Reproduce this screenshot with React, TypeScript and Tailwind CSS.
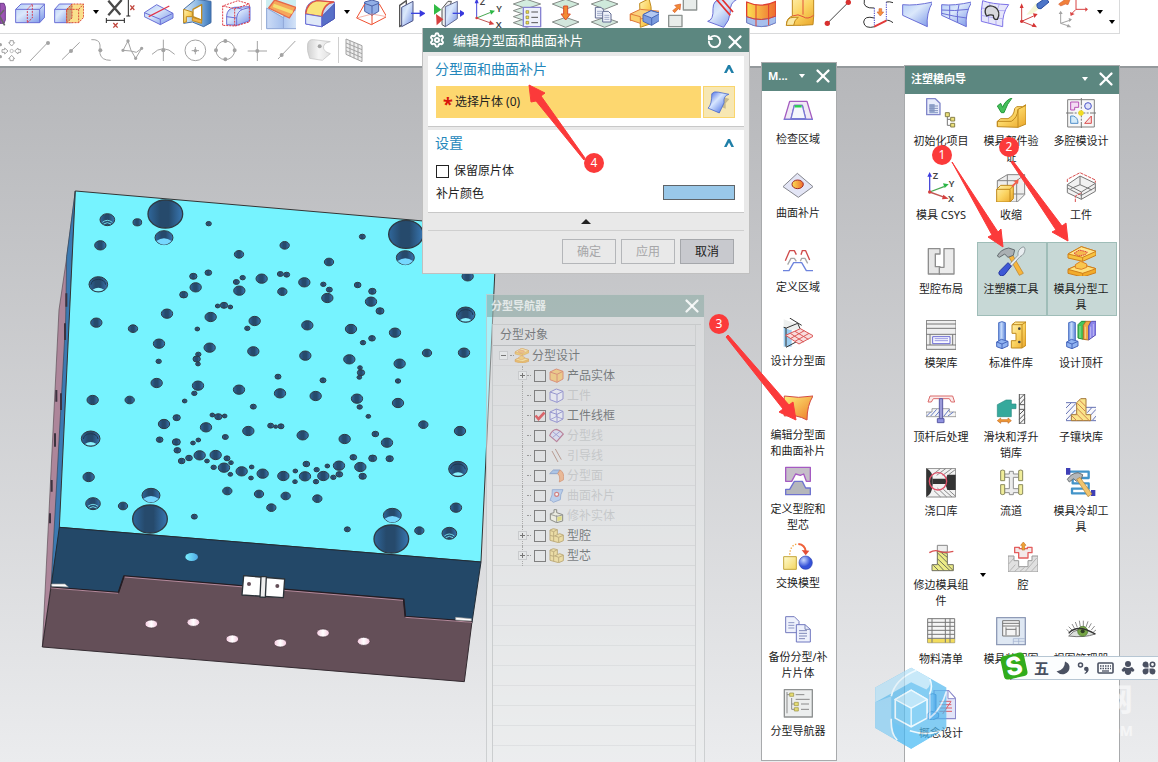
import React from "react";
import { RotateCcw, Settings, X } from "lucide-react";

type Shape = [d: string, fill?: string, stroke?: string, width?: number, dash?: string];

const dot = (x: number, y: number, r: number, ry = r) =>
  `M${x - r} ${y}a${r} ${ry} 0 1 0 ${r * 2} 0a${r} ${ry} 0 1 0 ${-r * 2} 0Z`;

const BLUE = "url(#blue)";
const GOLD = "url(#gold)";
const SILVER = "url(#silver)";
const NAVY = "#6a6fd6";
const GREY = "#a3a3a3";
const BROWN = "#c08a1e";

function Glyph({ shapes, box = "0 0 90 90", className = "size-[30px]" }: { shapes: Shape[]; box?: string; className?: string }) {
  return (
    <svg viewBox={box} className={`block shrink-0 ${className}`} aria-hidden="true">
      {shapes.map(([d, fill = "none", stroke = "none", width = 3, dash], i) => (
        <path key={i} d={d} fill={fill} stroke={stroke} strokeWidth={width} strokeDasharray={dash} strokeLinejoin="round" />
      ))}
    </svg>
  );
}

const layers: Shape[] = [
  ["M4 68l40-14 42 14-42 14Z", "#d7ebe0", "#868c88"],
  ["M4 50l40-14 42 14-42 14Z", "#dcefe5", "#868c88"],
  ["M4 32l40-14 42 14-42 14Z", "#dcefe5", "#868c88"],
  ["M4 12l40-14 42 14-42 14Z", "#d3ecdf", "#868c88"],
];
const twoLayers: Shape[] = [
  ["M4 66l40-14 40 14-40 16Z", "#d2e6dc", "#868c88"],
  ["M4 12l40-14 40 14-40 16Z", "#cfeadb", "#868c88"],
];
const page = (x: number, y: number): Shape[] => [
  [`M${x} ${y}h17l8 8v24h-25Z`, "#f0f3fb", "#626b91"],
  [`M${x + 5} ${y + 12}h15M${x + 5} ${y + 18}h15M${x + 5} ${y + 24}h15`, "none", "#7885b0", 2],
];
const axes: Shape[] = [
  ["M11 54V2", "none", "#4a4ad8", 3],
  ["M5 10l6-16 6 16Z", "#3c3ce0"],
  ["M11 54l42-17", "none", "#48a852", 3],
  ["M50 30l16 2-12 12Z", "#2bb745"],
  ["M11 54l42 15", "none", "#c25653", 3],
  ["M51 61l13 12-16 2Z", "#d6403f"],
  [dot(11, 54, 4), "#d6403f"],
];

interface Tool {
  name: string;
  shapes: Shape[];
  letters?: [string, number, number][];
}

const tools: (Tool | "more" | "sep")[] = [
  {
    name: "分割体",
    shapes: [
      ["M2 28L18 12H89V52L74 68H2Z", BLUE, NAVY],
      ["M2 28H74V68M74 28L89 12", "none", NAVY],
      ["M52 12L37 28V68M37 68L52 54V12", "none", "#d34257", 3, "6 3"],
    ],
  },
  {
    name: "拆分",
    shapes: [
      ["M2 28L16 12H55V68H2Z", BLUE, NAVY],
      ["M2 28H38V68", "none", NAVY],
      ["M38 28L54 12H89V52L74 68H38Z", "#fae08c", "#db4b3c", 3, "6 3"],
      ["M38 28L54 12V54L38 68Z", "#c9a77a", "#db4b3c", 3, "6 3"],
      ["M38 28H74V68M74 28L89 12", "none", "#db4b3c", 3, "6 3"],
    ],
  },
  "more",
  {
    name: "删除尺寸",
    shapes: [
      ["M10 2L46 44M50 0L10 46", "none", "#4a4a4a", 7],
      ["M70 0V48M64 48H76M4 61H58M4 54V69M58 54V69", "none", "#222", 3],
      ["M76 16l12 14M88 16L76 30M25 69l13 14M38 69L25 83", "none", "#c0453c", 4],
    ],
  },
  {
    name: "修剪面",
    shapes: [
      ["M1 38L38 14L87 40V54L49 74L1 50Z", BLUE, NAVY],
      ["M1 38L49 58L87 40M49 58V74", "none", NAVY],
      ["M14 50L76 18", "none", "#e0364c", 4],
    ],
  },
  {
    name: "包容体",
    shapes: [
      ["M2 28L38 -2L84 4V68L62 80L28 66L2 70Z", "url(#steel)", "#466fa6"],
      ["M2 28L28 36V50H10V66L2 68Z", GOLD, BROWN],
      ["M30 28L56 14V60L30 50Z", "#fff", BROWN, 4],
      ["M28 52L56 60V70L28 62Z", "#f0b24a", BROWN],
    ],
  },
  {
    name: "偏置区域",
    shapes: [
      ["M14 74V46Q16 26 38 22L84 20V62L44 76Z", BLUE, NAVY],
      ["M14 50L44 54Q46 34 62 28L84 22M44 54V76M38 22L62 28", "none", NAVY],
      ["M2 76V18L48 2L82 12V66L40 78ZM2 18L38 26L82 12M38 26V78", "none", "#df3e48", 3, "6 3"],
    ],
  },
  "sep",
  {
    name: "倒斜角",
    shapes: [
      ["M0 0H94V86H0Z", "#cdeef1"],
      ["M2 24L50 52L92 28V86H2Z", "url(#steelLight)", "#8fa5d6"],
      ["M8 24L26 0L90 22L70 54Z", "#f6a65b", "#e5674b", 4],
      ["M22 16L80 37", "none", "#f5df72", 10],
      ["M52 50V86", "none", "#8fa5d6"],
    ],
  },
  {
    name: "边倒圆",
    shapes: [
      ["M2 32Q8 4 34 2L88 6V56L50 80L2 72Z", BLUE, NAVY],
      ["M50 50L88 12V56L50 80Z", "#5870c8", "#4b57b4"],
      ["M2 42Q6 8 36 2L86 6Q54 12 50 50Z", "#fae37b", "#df5344", 4],
      ["M2 42L50 50V80L2 72Z", "#dfe8f8", NAVY],
    ],
  },
  "more",
  {
    name: "缩放体",
    shapes: [
      ["M26 6L48 0L68 6V34L48 46L26 34Z", "#91aee6", "#4c62a7"],
      ["M26 10L48 18L68 10M48 18V46", "none", "#4c62a7"],
      ["M26 12L2 54L46 74L92 50L70 12M48 44V74", "none", "#ef5030", 3],
      ["M2 54L48 42L92 50", "none", "#ef9080", 2],
    ],
  },
  {
    name: "移动面",
    shapes: [
      ["M14 16L34 2V64L14 80Z", "#fff", "#555", 4],
      ["M20 22L54 4V62L20 80Z", BLUE, "#4f5685"],
      ["M48 40H78", "none", "#3c46e0", 4],
      ["M74 30L92 40L74 51Z", "#3838dd"],
    ],
  },
  {
    name: "替换面",
    shapes: [
      ["M24 26L42 4H52L34 80L24 74Z", "#eee", "#555", 3],
      ["M34 20L70 4V56L34 80Z", BLUE, "#666d92"],
      ["M0 12L22 29L0 44Z", "#32bb45"],
      ["M6 42L28 58L8 76Z", "#d6403f"],
      ["M56 40H80", "none", "#3c46e0", 4],
      ["M78 30L94 40L78 51Z", "#3838dd"],
    ],
  },
  { name: "坐标系", shapes: axes, letters: [["Z", 20, 15], ["Y", 70, 35], ["X", 68, 84]] },
  {
    name: "图层设置",
    shapes: [
      ...layers,
      ["M34 22H86V80H34Z", "#eef1fb", "#8783d2", 4],
      ["M42 32h8v8h-8ZM42 48h8v8h-8ZM42 64h8v8h-8Z", "#f2e04e", "#8b8436", 2],
      ["M58 36H78M58 52H78M58 68H78", "none", "#555", 3],
    ],
  },
  {
    name: "移动至图层",
    shapes: [...twoLayers, ["M38 18H50V42H58L44 60L30 42H38Z", "#f28a32", "#d94c2e"]],
  },
  { name: "复制至图层", shapes: [...twoLayers, ...page(16, 22), ...page(38, 34)] },
  {
    name: "组合",
    shapes: [
      ["M32 10L60 -4L66 20L68 70L34 82Z", GOLD, BROWN],
      ["M4 42L34 28L94 34L62 52L4 62Z", "#fbd27b", "#e07a3a"],
      ["M42 44L66 32L94 40V60L68 76L42 64Z", "#7a9bde", "#4a69b8"],
      ["M42 44L66 32L94 40L68 54Z", "#b4c9f2", "#4a69b8"],
      ["M68 54V76", "none", "#4a69b8"],
      ["M4 42V60L34 70V50Z", "#fbcf6c", "#e07a3a"],
    ],
  },
  {
    name: "移动对象",
    shapes: [
      ["M2 46H42V80H2Z", "#e8ecea", "#8d9391", 4],
      ["M46 -6H86V30H46Z", "#e8ecea", "#8d9391", 4],
      ["M14 32L26 22L20 16L38 12L36 30L31 26L20 38Z", "#f18a35", "#d85c30", 2],
    ],
  },
  {
    name: "修剪片体",
    shapes: [
      ["M2 64Q20 60 18 26Q18 0 42 -2H90Q68 8 70 36Q68 62 50 82Z", BLUE, NAVY],
      ["M28 -2L70 46M40 -8L78 36", "none", "#e23232", 5],
    ],
  },
  {
    name: "缝合",
    shapes: [
      ["M2 6Q46 26 90 4V66Q46 92 2 66Z", "url(#orange)", "#df3f30", 4],
      ["M2 50Q46 68 90 48V68Q46 92 2 68Z", "#a8bfec", "#6a83cf"],
      ["M2 50Q46 68 90 48M30 14V78M68 12V76", "none", "#df3f30", 3],
    ],
  },
  {
    name: "管道",
    shapes: [
      ["M22 -2H86V48L84 74L50 76H4Q4 54 22 48Z", GOLD, BROWN],
      ["M54 0V44M22 48Q40 40 54 50T86 46", "none", "#e2533c", 3],
      ["M4 76Q6 52 24 52H40Q28 58 26 76Z", "#fae9a4", BROWN],
    ],
  },
  {
    name: "直线",
    shapes: [["M10 70L72 8", "none", "#444", 3], [dot(10, 70, 8), "#d8302f"], [dot(73, 7, 8), "#d8302f"]],
  },
  {
    name: "桥接曲线",
    shapes: [
      ["M34 54Q4 46 2 66Q4 88 36 80M4 0Q-2 26 34 24M90 68Q76 58 70 62", "none", "#333", 3],
      ["M34 24V76M70 6V62", "none", "#4948cb", 3, "4 3"],
      ["M34 80L70 62", "none", "#e33a3a", 6],
      ["M48 26H56V36H62L52 48L42 36H48Z", "#f6923c", "#d8683a", 2],
      ["M70 6Q80 4 90 8", "none", "#333"],
    ],
  },
  { name: "曲面", shapes: [["M2 14Q40 18 92 6Q72 40 76 80L2 46Z", BLUE, NAVY]] },
  {
    name: "网格曲面",
    shapes: [
      ["M2 14Q40 18 92 6Q72 40 76 80L2 46Z", BLUE, NAVY],
      ["M2 30Q40 34 82 28M2 40Q40 50 77 54M26 16V56M54 14Q46 40 50 68", "none", NAVY, 3],
    ],
  },
  {
    name: "投影曲面",
    shapes: [
      ["M8 2Q34 12 86 14Q66 40 68 80L4 64Q2 30 8 2Z", "#e6e6fa", "#7d72e8", 3],
      ["M30 8Q22 38 26 70M58 12Q46 40 48 76M6 24Q40 34 76 32M4 46Q36 54 68 56", "none", "#9b93ee", 2],
      ["M18 24Q28 12 46 22Q64 36 52 58Q40 60 40 46Q32 42 20 48Q12 36 18 24Z", "#d8d8dc", "#333", 4],
    ],
  },
  {
    name: "动态坐标系",
    shapes: [
      ["M22 44L52 8L64 24L40 42Z", "#f4f6d6"],
      ["M54 12L80 -6L90 6L66 26Q52 28 54 12Z", "#4c75c8", "#2b4ea0"],
      ["M8 64V20M8 64L44 48M8 64L44 78", "none", "#cf4444", 3],
      ["M2 24L8 10L14 24ZM42 40L56 42L46 54ZM44 68L54 82L38 80Z", "#d63535"],
      [dot(8, 64, 5), "#d63535"],
    ],
  },
  {
    name: "坐标系变换",
    shapes: [
      ["M54 28V-4M54 28H84M54 28L40 42", "none", "#d84444", 3],
      ["M82 22L90 28L82 35ZM36 36L50 42L38 48Z", "#d84444"],
      ["M8 70V38M8 70L38 60M8 70L32 78", "none", GREY, 3],
      ["M2 42L8 32L14 42ZM32 54L42 58L34 66ZM30 72L40 82L26 82Z", GREY],
      ["M2 12L22 -2L38 -6L30 14L22 12L8 18Z", "#f0803a", "#d6603a", 2],
    ],
  },
];

const snaps: { name: string; shapes: Shape[] }[] = [
  { name: "端点", shapes: [["M6 72L58 18", "none", GREY], [dot(60, 18, 6), GREY]] },
  { name: "中点", shapes: [["M9 68L62 16", "none", GREY], [dot(36, 42, 6), GREY]] },
  { name: "控制点", shapes: [["M4 8Q28 6 30 24V50Q34 70 62 70", "none", GREY], [dot(31, 40, 6), GREY]] },
  {
    name: "极点",
    shapes: [["M6 40L21 12L30 40L44 64L62 34L46 46L30 42Z", "none", GREY], [dot(6, 40, 5) + dot(21, 12, 5) + dot(44, 64, 5) + dot(62, 34, 5), GREY]],
  },
  { name: "交点", shapes: [["M0 52Q34 18 68 52M34 8V72", "none", GREY], [dot(34, 40, 6), GREY]] },
  { name: "圆心", shapes: [[dot(37, 40, 31), "none", GREY], ["M37 30V52M26 41H48", "none", GREY], [dot(37, 41, 5), GREY]] },
  { name: "象限点", shapes: [[dot(34, 40, 28), "none", GREY], [dot(34, 12, 6) + dot(34, 67, 6) + dot(6, 40, 6) + dot(62, 40, 6), GREY]] },
  { name: "存在点", shapes: [["M37 12V72M8 42H66", "none", GREY], [dot(37, 42, 6), GREY]] },
  { name: "曲线上的点", shapes: [["M6 66L58 12", "none", GREY], [dot(17, 54, 6), GREY]] },
  {
    name: "面上的点",
    shapes: [
      ["M2 20Q6 6 20 8L70 14Q46 18 50 36Q54 46 70 50L46 70L8 64Q-2 40 2 20Z", SILVER, "#c0c0c0", 2],
      [dot(38, 28, 6), GREY],
    ],
  },
];

const gridSnap: Shape[] = [
  ["M6 6L54 26V74L6 52Z", "#eee", GREY],
  ["M18 11V58M30 16V64M42 21V69M6 18L54 38M6 30L54 50M6 41L54 62", "none", GREY],
];

const moldParting: Tool[] = [
  {
    name: "检查区域",
    shapes: [
      ["M4 70L20 16H72L88 70H68L58 28H34L24 70Z", "#f0eaf4", "#a45bc0", 4],
      ["M34 28L24 68H68L58 28Z", "#f5f7fc", "#7779d4", 4],
      ["M2 70H90", "none", "#7779d4", 4],
      ["M35 31H56", "none", "#2bd34c", 7],
    ],
  },
  {
    name: "曲面补片",
    shapes: [
      ["M0 50L43 10L90 50L46 82Z", "#e3e5f5", "#85868e", 3],
      [dot(44, 43, 17, 13), "url(#orange)", "#a02b2b", 3],
    ],
  },
  {
    name: "定义区域",
    shapes: [
      ["M7 50L20 20H34L40 32M56 20H68L80 48M54 32L58 20", "none", "#cf4b4b", 4],
      ["M14 62L24 43H34L40 52M52 52L56 43H66L74 58", "none", "#a9a9a9", 4],
      ["M0 80H18L32 56H56L70 80H90", "none", "#6d83dd", 4],
    ],
  },
  {
    name: "设计分型面",
    shapes: [
      ["M2 28H26V86H2Z", "#9ccdf0"],
      ["M2 4L48 20V34L20 36L2 28Z", "#edefee"],
      ["M2 28L10 30L44 16M20 0L56 22M9 30V86M9 88L50 66M44 16L54 38", "none", "#333", 3],
      ["M8 52L52 32L92 54L48 78Z", "#f8dcdc", "#db5757", 3],
      ["M22 46L62 72M36 40L76 64M22 62L64 38M36 70L78 46", "none", "#db5757", 3],
    ],
  },
  {
    name: "编辑分型面和曲面补片",
    shapes: [["M4 12Q46 20 90 12Q72 40 72 84Q40 66 4 72Q0 40 4 12Z", "url(#sunset)", "#d34b3f", 3]],
  },
  {
    name: "定义型腔和型芯",
    shapes: [
      ["M8 4H82V46L70 46L62 24L52 28L38 24L26 46H8Z", "#c5bfc8", "#a55ac2", 4],
      ["M8 86V70H20L34 46H58L68 66H82V86Z", "#b5b7bb", "#6f73cf", 4],
    ],
  },
  {
    name: "交换模型",
    shapes: [
      ["M2 50H40V88H2Z", "url(#paleGold)", "#c4a73c", 3],
      [dot(68, 68, 20), "url(#ball)", "#2d42b0", 2],
      ["M20 44Q22 14 44 12", "none", "#f0a23b", 4, "4 5"],
      ["M46 12Q66 14 68 34", "none", "#ef623b", 6],
      ["M56 30L79 32L68 46Z", "#e34e38"],
    ],
  },
  {
    name: "备份分型/补片片体",
    shapes: [
      ["M8 8H34L48 22V56H8Z", "#eef1fc", "#7479bd", 3],
      ["M16 26H34M16 34H34M16 42H34", "none", "#8d96c4", 3],
      ["M40 32H66L82 46V84H40Z", "#eef1fc", "#6f76c0", 3],
      ["M66 32V46H82M48 50H72M48 58H72M48 66H72M48 74H66", "none", "#7f88b8", 3],
    ],
  },
  {
    name: "分型导航器",
    shapes: [
      ["M4 5H88V87H4Z", "#eceeee", "#8e9191", 4],
      ["M12 12V76M26 30V64H36M26 48H34M12 20H20", "none", "#8b8b8b", 3],
      ["M20 15h12v10h-12ZM34 43h12v10h-12ZM34 59h12v10h-12Z", "#e6dc72", "#969043", 2],
      ["M38 20H64M38 34H80M54 48H78M54 64H78", "none", "#8a8a8a", 3],
    ],
  },
];

const bolt: Shape[] = [
  ["M8 8Q18 2 28 8V62H8Z", "url(#steelV)", "#4d70c2", 3],
  ["M2 66L16 58L36 64V78L18 86L2 80Z", "#8fb2f1", "#4666bc", 3],
  ["M2 66L18 72L36 64M18 72V86", "none", "#4666bc"],
];
const hammer: Shape[] = [
  ["M36 28L48 24L82 82L70 88Z", "#f7b63e", "#b97b21", 2],
  ["M4 30Q14 10 38 6L56 12L52 28L36 34L26 24L10 34Z", "#aab0b3", "#626a6e", 3],
];
const moldHalves: Shape[] = [
  ["M6 24L46 2L90 16V28L50 46L6 36Z", "#f6c23f", "#cf7f1c"],
  ["M6 24L46 2L90 16L50 34Z", "#ffe68e", "#cf7f1c"],
  ["M50 34V46", "none", "#cf7f1c"],
  ["M24 22L40 12L64 18L58 26L38 30Z", "#f5b94d", "#dc4343", 3, "5 2"],
  ["M6 70L42 54L90 68V80L50 93L6 82Z", "#f2ac2a", "#cf7f1c"],
  ["M6 70L42 54L90 68L50 82Z", "#ffe07a", "#cf7f1c"],
  ["M50 82V93", "none", "#cf7f1c"],
  ["M28 56L44 46L62 54V64L46 70L28 66Z", "#f9c64d", "#dc8126"],
];

type WizardItem = Tool & { active?: boolean };
const wizard: (WizardItem | "more")[] = [
  {
    name: "初始化项目",
    shapes: [
      ["M2 2H28L42 16V50H2Z", "#e8ecfb", "#8287ca", 4],
      ["M10 18H26V42H36V46H10Z", "#94a6cd"],
      ["M10 24H36M10 31H36M10 38H36", "none", "#8292bd", 3],
      ["M64 54V82H74M64 64H74", "none", "#777", 3],
      ["M58 44h12v12h-12ZM74 58h12v11h-12ZM74 76h12v11h-12Z", "#ebe07a", "#87804a", 3],
    ],
  },
  {
    name: "模具部件验证",
    shapes: [
      ["M4 70L14 62H36Q54 54 56 32L62 26H80L90 20V78L66 88L4 86Z", GOLD, BROWN],
      ["M4 70H46Q64 60 66 34L90 22M66 34V88M4 70V86", "none", BROWN],
      ["M4 24L14 16L20 28Q28 6 48 0Q34 16 24 44H16Z", "#46c05a", "#23973a"],
    ],
  },
  {
    name: "多腔模设计",
    shapes: [
      ["M5 5H85V87H5Z", "#f7f7f7", "#818181", 3],
      ["M46 0V90M0 45H90", "none", "#777", 3, "22 4 6 4"],
      [dot(45, 45, 8), "#f2dc20"],
      ["M14 12H38V28H26V36H14Z", "#f3dcf3", "#b651b6", 3],
      [dot(66, 24, 10), "#dfe2fa", "#4b56c8"],
      ["M14 76V54H22Q36 58 36 76Z", "#d5ecfa", "#518fc8"],
      ["M56 76L76 54V76Z", "#fae0e0", "#d94c4c"],
    ],
  },
  {
    name: "模具 CSYS",
    shapes: [
      ["M11 60V12", "none", "#4a4ad8", 4],
      ["M4 14L11 0L18 14Z", "#3c3ce0"],
      ["M11 60L54 44", "none", "#48a852", 4],
      ["M51 34L68 37L56 48Z", "#2bb745"],
      ["M11 60L56 76", "none", "#c25653", 4],
      ["M52 68L68 80L48 82Z", "#d6403f"],
      [dot(11, 60, 5), "#d6403f"],
    ],
    letters: [["Z", 20, 20], ["Y", 68, 44], ["X", 66, 90]],
  },
  {
    name: "收缩",
    shapes: [
      ["M4 26L34 8H86V68L64 90H4Z", "#eee", "#858585"],
      ["M4 26H62V90M62 26L86 8M34 8V66H86", "none", "#858585"],
      ["M2 52L14 40H52V80L42 90H2Z", GOLD, BROWN],
      ["M2 52H42V90M42 52L52 42", "none", BROWN],
      ["M46 42L58 30L52 28L68 22L66 36L62 34L50 46Z", "#f3604b"],
    ],
  },
  {
    name: "工件",
    shapes: [
      ["M4 38L42 12L88 34V58L46 82L4 62Z", "#f2f2f2", "#777"],
      ["M4 38L46 60L88 34M46 60V82M4 48L46 70L88 46M42 12V38L14 50M42 38L78 54", "none", "#777"],
      ["M4 30V22L42 2L88 24V32M28 90V72L48 62", "none", "#d94d4d", 3, "10 3"],
    ],
  },
  {
    name: "型腔布局",
    shapes: [["M7 8H42V24H28V62H42V84H7Z", "#e6e6e6", "#8e8e8e", 4], ["M54 8H84V84H40V64H54Z", "#ececec", "#8e8e8e", 4]],
  },
  {
    name: "注塑模工具",
    active: true,
    shapes: [...hammer, ["M78 4Q86 0 87 10Q86 26 72 32L34 74L28 68L66 28Q64 12 78 4Z", "#e8edf0", "#70797d", 2], ["M36 50L46 60L26 86Q16 94 10 86Q6 80 12 74Z", "#3d58d5", "#2638a0", 3]],
  },
  { name: "模具分型工具", active: true, shapes: moldHalves },
  {
    name: "模架库",
    shapes: [
      ["M1 1H90V88H1Z", "#efefef", "#777", 3],
      ["M1 12H90M1 25H90M1 43H90M1 75H90M12 43V75M80 43V75", "none", "#777", 3],
      ["M20 50H72V71H20Z", "#f8f8ff", "#6b6bd4", 3],
      ["M26 56H66M26 62H66", "none", "#6b6bd4", 2],
    ],
  },
  {
    name: "标准件库",
    shapes: [
      ...bolt,
      ["M48 14L58 6H90V76L78 84H46V62H60V40H48Z", GOLD, BROWN],
      ["M78 14V84M78 14L90 6M78 14H48", "none", BROWN],
      [dot(70, 26, 4) + dot(70, 66, 4), "#444"],
    ],
  },
  {
    name: "设计顶杆",
    shapes: [
      ...bolt,
      ["M36 14L46 4H60L52 16V58L36 54Z", "#45c65a", "#258a37", 3],
      ["M52 16L60 4H74L68 18V60L52 58Z", "#f3a944", "#b97228", 3],
      ["M68 18L76 4H90V44L68 60Z", "#8b84ea", "#5850b2", 3],
      ["M42 18V54M58 20V56M74 20V54M82 12V48", "none", "#ffffffaa", 2],
    ],
  },
  {
    name: "顶杆后处理",
    shapes: [
      ["M6 24L12 6H80L86 24H76L70 14H22L16 24Z", "#fbeaea", "#db6b6b", 3],
      ["M0 54H18V44H70V54H90V68H0Z", "#f5f5f5", "#777", 2],
      ["M2 66L14 54M14 66L32 46M28 66L42 50M54 66L70 46M66 66L82 54", "none", "#667cc5", 3],
      ["M40 14H50V76H40Z", "#9b9bd8", "#5a5aa4", 3],
      ["M34 74H54V86H34Z", "#8f92e0", "#5a5aa4", 3],
    ],
  },
  {
    name: "滑块和浮升销库",
    shapes: [
      ["M4 32L30 18H46V30H60V44H46V68H4Z", "#35a99c", "#2b8b83", 2],
      ["M4 80L14 72V77H36V72L46 80L36 88V83H14V88Z", "#f19a35", "#c46a22", 2],
      ["M70 0H86V90H70Z", "#f4f4f4", "#555", 3],
      ["M70 16L86 0M70 32L86 14M70 62L86 46M70 76L86 60M70 90L86 74M70 32H86M70 46H86", "none", "#555", 3],
    ],
  },
  {
    name: "子镶块库",
    shapes: [
      ["M0 26H30V80H0ZM60 40H92V80H60Z", "#f8f8fc"],
      ["M0 42L16 26M0 60L30 28M0 78L28 48M64 56L78 40M66 72L90 46M80 78L92 64M0 80H92M0 26H30M60 40H92", "none", "#6774b4", 3],
      ["M32 26L44 14H60V62H74V80H16V62H32Z", "#fae48a", "#a27638", 3],
      ["M34 28L58 52M40 18L60 38M32 42L70 80M30 58L52 80M18 66L32 80", "none", "#d3844e", 3],
    ],
  },
  {
    name: "浇口库",
    shapes: [
      ["M1 1H89V87H1Z", "#f2f2f2", "#888"],
      ["M20 20L44 1M32 22L60 1M50 22L78 1M68 20L89 4M24 68L44 87M34 60L62 87M52 64L78 87M70 68L89 85", "none", "#8a8a8a", 3],
      ["M1 1Q20 10 20 34V50Q18 78 1 87Z", "#333"],
      ["M20 32H60L64 20H89V66H64L58 48H20Z", "#333"],
      [dot(36, 40, 26), "none", "#df5068", 4],
    ],
  },
  {
    name: "流道",
    shapes: [
      ["M26 18H40V10H52V18H68V28H52V62H68V74H52V80H40V74H26V62H40V28H26Z", "#ececec", "#8e8e8e", 3],
      ["M14 8Q20 4 26 8V38H14ZM14 50H26V78Q20 82 14 78ZM68 8Q74 4 80 8V38H68ZM68 50H80V78Q74 82 68 78Z", "#f0ed9a", "#8a8a5e", 3],
    ],
  },
  {
    name: "模具冷却工具",
    shapes: [
      ["M10 11H68V30H20V46H68V62H18V76H80", "none", "#4394c9", 7],
      ["M0 0H13V20H0ZM75 66H88V84H75Z", "#3e3fb6"],
      ["M4 34Q16 16 36 14L50 20L46 34L32 40L22 32L10 42Z", "#b4b8ba", "#686e72", 3],
      ["M32 34L42 28L78 78L66 86Z", "#f1c46e", "#a9803c", 2],
    ],
  },
  {
    name: "修边模具组件",
    shapes: [
      ["M34 10H64V30H34Z", "#eee", "#888", 3],
      ["M34 28L64 34V68H82V86H18V68H34Z", "#ecec86", "#707060", 3],
      ["M34 32L64 62M34 50L72 86M46 32L64 46M34 64L54 86M22 70L38 86M66 70L80 84", "none", "#70705a", 3],
      ["M10 32Q26 22 40 28T82 28", "none", "#d95151", 4],
    ],
  },
  "more",
  {
    name: "腔",
    shapes: [
      ["M0 42H18V56H32V74H60V56H72V42H90V90H0Z", "#e0e0e0", "#999", 3],
      ["M4 88L22 68M20 88L36 74M36 88L50 76M52 88L86 48M70 88L90 66M2 66L18 48", "none", "#a0a0a0", 2],
      ["M20 16H34V20H58V16H72V32H60V48H32V32H20Z", "#f3e9e9", "#e45e5e", 4],
      ["M46 0L54 10H50V24H42V10H38Z", "#f0a334", "#c87928", 2],
    ],
  },
  {
    name: "物料清单",
    shapes: [
      ["M5 8H86V80H5Z", "#f5f5f5", "#777", 3],
      ["M5 68H86V80H5Z", "#f2dc5d"],
      ["M5 19H86M5 31H86M5 43H86M5 55H86M5 67H86M18 8V80M58 8V80M72 8V80", "none", "#777", 3],
    ],
  },
  {
    name: "模具装配图纸",
    shapes: [
      ["M2 5H88V86H2Z", "#dfe8f3", "#8f9bb7", 4],
      ["M20 14H70V60H20Z", "#f5f5f5", "#777", 3],
      ["M20 22H70M20 30H70M30 34V58M60 34V58M30 40H60", "none", "#777", 3],
      ["M52 68H86M52 76H86M52 68V84M68 68V84", "none", "#9daccc", 2],
    ],
  },
  {
    name: "视图管理器",
    shapes: [
      ["M8 60Q36 24 88 54Q54 66 8 60Z", "#dce0dc", "#777", 3],
      [dot(50, 46, 15), "#76a545", "#46712b", 2],
      [dot(50, 46, 6), "#2f3f24"],
      ["M8 52Q34 22 88 54", "none", "#333", 4],
      ["M10 48L2 40M18 42L8 32M26 38L18 24M34 34L28 18M43 32L40 14M52 31V14M60 33L66 16M68 36L76 22M76 42L86 30M82 48L90 42", "none", "#555", 2],
    ],
  },
  {
    name: "概念设计",
    shapes: [
      ["M24 0H66L89 26V86H24Z", "#e2e5f8", "#8d8bcc", 4],
      ["M66 0V26H89Z", "#fff", "#8d8bcc", 3],
      ["M40 34H76M40 44H76M40 54H78M40 64H78M50 72L74 36", "none", "#d95d68", 3],
      ["M10 14Q20 8 30 14V70H10Z", "url(#steelV)", "#4475bd", 3],
      ["M4 72L16 64L38 70V82L20 90L4 86Z", "#8eb5ee", "#466bb7", 3],
    ],
  },
];

function Letters({ items }: { items?: [string, number, number][] }) {
  if (!items) return null;
  return (
    <svg viewBox="0 0 90 90" className="absolute inset-0 size-[30px] overflow-visible" aria-hidden="true">
      {items.map(([t, x, y]) => (
        <text key={t} x={x} y={y} fontSize="28" fontWeight="600" fontFamily="Noto Sans" fill="#444">{t}</text>
      ))}
    </svg>
  );
}

function Caret({ className = "text-black" }: { className?: string }) {
  return (
    <svg viewBox="0 0 6 4" className={`h-1 w-1.5 ${className}`} aria-hidden="true">
      <path d="M0 0H6L3 4Z" fill="currentColor" />
    </svg>
  );
}

function Toolbars() {
  return (
    <header className="border-b-2 border-[#94999c] bg-white">
      <div className="mr-[38px] flex h-[34px] items-start overflow-hidden border-r border-b border-[#d9dadb]">
        <div className="w-[15px] shrink-0">
          <Glyph box="0 0 45 90" className="h-[30px] w-[15px]" shapes={[["M0 10H12L16 20V60L12 70H0Z", "#9c55b4", "#6f3d8c"], ["M0 44L12 30M0 50L14 76", "none", "#666", 5]]} />
        </div>
        {tools.map((t, i) => {
          if (t === "more")
            return (
              <button key={i} aria-label="更多" className="flex h-6 w-3 shrink-0 items-center justify-start">
                <Caret />
              </button>
            );
          if (t === "sep") return <span key={i} className="h-[30px] w-[5px] shrink-0 border-l border-[#cfcfcf]" />;
          return (
            <button key={i} aria-label={t.name} className="relative mr-[9px] shrink-0">
              <Glyph shapes={t.shapes} />
              <Letters items={t.letters} />
            </button>
          );
        })}
        <button aria-label="更多命令" className="flex h-6 w-3 shrink-0 items-center"><Caret /></button>
        <button aria-label="工具栏选项" className="flex h-6 shrink-0 items-end"><Caret /></button>
      </div>
      <div className="flex h-8 items-center">
        <button aria-label="捕捉点" className="w-[28px] shrink-0">
          <Glyph
            box="0 0 84 72"
            className="h-6 w-[28px]"
            shapes={[
              [dot(1, 20, 5) + dot(1, 56, 5), GREY],
              ["M30 8H40V14H44L35 24L26 14H30ZM30 68H40V62H44L35 52L26 62H30ZM6 35H14V30L24 39L14 48V43H6ZM62 35H54V30L44 39L54 48V43H62Z", "#fff", GREY],
              [dot(35, 39, 5), "none", GREY, 2],
            ]}
          />
        </button>
        {snaps.map((s) => (
          <button key={s.name} aria-label={s.name} className="mr-[7px] shrink-0">
            <Glyph shapes={s.shapes} box="0 0 72 78" className="h-[26px] w-6" />
          </button>
        ))}
        <span className="h-[26px] w-[6px] border-l border-[#cfcfcf]" />
        <button aria-label="栅格点"><Glyph shapes={gridSnap} box="0 0 72 78" className="h-[26px] w-6" /></button>
      </div>
    </header>
  );
}

/* Hole tables: x, y, radius in the drawing's own units. */
const upperHoles = [
  [307, 127, 13], [521, 131, 8], [196, 196, 17], [749, 196, 14], [982, 170, 9], [612, 223, 14], [882, 246, 14], [520, 278, 10],
  [475, 289, 11], [623, 293, 8], [604, 306, 9], [680, 296, 17], [736, 282, 9], [755, 284, 9], [808, 307, 17], [865, 313, 8],
  [883, 329, 9], [968, 315, 10], [1012, 334, 11], [1298, 289, 17], [482, 322, 17], [446, 344, 12], [613, 332, 17], [742, 335, 14],
  [877, 354, 17], [1008, 365, 17], [1035, 393, 12], [548, 378, 7], [567, 376, 11], [586, 381, 7], [396, 401, 17], [527, 411, 17],
  [659, 423, 17], [817, 436, 17], [948, 447, 17], [1080, 458, 17], [184, 428, 17], [294, 446, 14], [487, 447, 7], [637, 445, 8],
  [1011, 475, 10], [984, 488, 8], [372, 491, 17], [524, 503, 17], [655, 514, 17], [811, 527, 17], [943, 538, 17], [1094, 551, 17],
  [1176, 519, 14], [1287, 518, 17], [371, 544, 8], [490, 523, 8], [485, 537, 11], [489, 552, 7], [975, 563, 7], [978, 578, 11],
  [973, 592, 7], [1089, 603, 8], [864, 601, 9], [729, 590, 9], [365, 609, 17], [489, 617, 17], [478, 640, 8], [449, 663, 7],
  [612, 629, 17], [735, 640, 17], [842, 648, 17], [966, 656, 17], [974, 681, 8], [1089, 669, 17], [173, 660, 17], [284, 660, 14],
  [655, 680, 9], [532, 705, 7], [550, 710, 11], [569, 708, 7], [1000, 709, 7], [425, 713, 11],
];
const lowerHoles = [
  [387, 12, 17], [513, 22, 17], [571, 51, 9], [640, 33, 17], [707, 17, 9], [722, 20, 6], [738, 19, 9], [803, 46, 17],
  [929, 57, 17], [1021, 42, 10], [1056, 68, 17], [1165, 14, 14], [1275, 33, 17], [374, 59, 10], [424, 66, 12], [474, 69, 7],
  [490, 60, 7], [427, 91, 10], [462, 114, 10], [440, 123, 10], [494, 106, 17], [542, 105, 17], [576, 115, 9], [588, 128, 7],
  [516, 123, 7], [536, 142, 8], [567, 143, 17], [586, 163, 7], [620, 154, 17], [650, 141, 7], [648, 174, 7], [683, 161, 17],
  [745, 168, 17], [781, 153, 7], [780, 185, 7], [814, 132, 10], [810, 169, 17], [845, 149, 8], [843, 185, 8], [865, 168, 17],
  [877, 138, 7], [895, 172, 8], [912, 137, 17], [913, 163, 10], [955, 112, 10], [976, 141, 17], [983, 169, 11], [1013, 115, 12],
  [1064, 116, 11], [161, 171, 17], [264, 258, 14], [478, 290, 9], [577, 213, 14], [672, 222, 14], [752, 228, 14], [709, 263, 14],
  [847, 236, 14], [937, 328, 9], [1153, 332, 14], [1263, 263, 17],
];
const throughHoles = [[387, 173], [1111, 233], [348, 946], [1072, 1006]];
const steppedHoles = [[190, 313, 28], [1292, 404, 28], [167, 776, 28], [1269, 867, 28]];
const screwHoles = [[217, 119], [174, 971], [1243, 1060]];
const bigHoles = [[391, 102], [1113, 163], [345, 1017], [1069, 1077]];

function MoldModel() {
  return (
    <svg viewBox="0 68 500 694" className="absolute top-0 left-0 h-[694px] w-[500px]" role="img" aria-label="模具三维模型">
      <defs>
        <linearGradient id="blue" x1="0" y1="0" x2="1" y2="1"><stop offset="0" stopColor="#b4cdf7" /><stop offset=".4" stopColor="#dbe8fb" /><stop offset="1" stopColor="#7390e6" /></linearGradient>
        <linearGradient id="gold" x1="0" y1="0" x2="1" y2="1"><stop offset="0" stopColor="#fff2b4" /><stop offset=".5" stopColor="#fbd462" /><stop offset="1" stopColor="#e9a529" /></linearGradient>
        <linearGradient id="paleGold" x1="0" y1="0" x2="1" y2="1"><stop offset="0" stopColor="#fffbd0" /><stop offset="1" stopColor="#f3d560" /></linearGradient>
        <linearGradient id="silver"><stop offset="0" stopColor="#d0d0d0" /><stop offset=".5" stopColor="#f5f5f5" /><stop offset="1" stopColor="#e0e0e0" /></linearGradient>
        <linearGradient id="steel"><stop offset="0" stopColor="#dceaf7" /><stop offset=".6" stopColor="#7fb0e0" /><stop offset="1" stopColor="#3a75b8" /></linearGradient>
        <linearGradient id="steelLight"><stop offset="0" stopColor="#ccdcf6" /><stop offset=".5" stopColor="#a9c2ee" /><stop offset="1" stopColor="#d6e5f8" /></linearGradient>
        <linearGradient id="steelV"><stop offset="0" stopColor="#6f9ae8" /><stop offset=".4" stopColor="#c7dcfb" /><stop offset="1" stopColor="#5f87db" /></linearGradient>
        <linearGradient id="orange"><stop offset="0" stopColor="#fbe052" /><stop offset="1" stopColor="#ee6a2e" /></linearGradient>
        <linearGradient id="sunset" x1="0" y1="0" x2="1" y2="1"><stop offset="0" stopColor="#fdf07a" /><stop offset="1" stopColor="#ee7a26" /></linearGradient>
        <radialGradient id="ball" cx=".35" cy=".3"><stop offset="0" stopColor="#c9d9ff" /><stop offset="1" stopColor="#3552d8" /></radialGradient>
        <linearGradient id="hole"><stop offset="0" stopColor="#2f679c" /><stop offset=".35" stopColor="#264a6c" /><stop offset=".6" stopColor="#264a6c" /><stop offset="1" stopColor="#3877b3" /></linearGradient>
        <linearGradient id="pin"><stop offset="0" stopColor="#f5c9df" /><stop offset=".5" stopColor="#fff" /><stop offset="1" stopColor="#f5c9df" /></linearGradient>
        <linearGradient id="port"><stop offset="0" stopColor="#7af0ff" /><stop offset="1" stopColor="#4fa8e6" /></linearGradient>
      </defs>
      <g transform="translate(35 180) scale(.33333)" strokeLinejoin="round">
        <path d="M121 33L94 240L72 390L22 1401L72 1042Z" fill="#ad869a" stroke="#5b4c55" strokeWidth="2" />
        <path d="M121 33L95 230L92 420L48 1220L75 1042Z" fill="#3b7ab2" stroke="#31475b" strokeWidth="2" />
        <path d="M94 340V380M64 630V665M60 760V800M50 900V935M45 1000V1030M90 430V480M78 640V690" stroke="#3d3340" strokeWidth="6" />
        <path d="M121 33L1386 142L1338 1146L73 1042Z" fill="#76f3ff" stroke="#333" strokeWidth="3" />
        <path d="M73 1042L1338 1146L1311 1328L48 1222Z" fill="#234868" stroke="#222c36" strokeWidth="3" />
        <path d="M48 1222L250 1238L267 1188L1106 1258L1111 1310L1311 1325L1288 1505L22 1401Z" fill="#644f58" stroke="#332a30" strokeWidth="3" />
        <path d="M48 1222L250 1238L267 1188L1106 1258L1111 1310L1311 1325" fill="none" stroke="#241d24" strokeWidth="5" />
        <path d="M48 1224L250 1240M269 1191L1104 1261M1111 1312L1311 1327" fill="none" stroke="#b58a9c" strokeWidth="3" />
        <path d="M50 1212H90L100 1221L50 1219ZM1262 1312L1309 1316V1323L1262 1320Z" fill="#fff" stroke="#999" strokeWidth="2" />
        <g stroke="#2b3238" strokeWidth="4">
          <path d="M626 1187L749 1197L745 1253L621 1245Z" fill="#fff" />
          <path d="M678 1190H694L691 1252L675 1251Z" fill="#eee" />
        </g>
        <circle cx="642" cy="1212" r="6" fill="#644f58" />
        <circle cx="727" cy="1218" r="6" fill="#644f58" />
        <ellipse cx="470" cy="1131" rx="19" ry="12" fill="url(#port)" />
        {[[349, 1332], [475, 1327], [592, 1377], [736, 1389], [864, 1359], [986, 1384]].map(([x, y]) => (
          <ellipse key={x} cx={x} cy={y} rx="19" ry="12" fill="url(#pin)" stroke="#49373f" strokeWidth="2" />
        ))}
        <g fill="url(#hole)" stroke="#2e3a44" strokeWidth="3">
          {upperHoles.map(([x, y, r]) => <ellipse key={`${x}-${y}`} cx={x} cy={y} rx={r} ry={r * 0.82} />)}
          {lowerHoles.map(([x, y, r]) => <ellipse key={`${x}-${y}`} cx={x} cy={y + 720} rx={r} ry={r * 0.82} />)}
          {bigHoles.map(([x, y]) => <ellipse key={x} cx={x} cy={y} rx="52" ry="42" strokeWidth="4" />)}
          {throughHoles.map(([x, y]) => (
            <g key={x}>
              <ellipse cx={x} cy={y} rx="27" ry="21" />
              <path d={`M${x - 23} ${y + 10}Q${x} ${y - 6} ${x + 23} ${y + 10}Q${x + 12} ${y + 21} ${x} ${y + 21}Q${x - 12} ${y + 21} ${x - 23} ${y + 10}Z`} fill="#76d8ff" stroke="none" />
            </g>
          ))}
          {steppedHoles.map(([x, y, r]) => (
            <g key={x}>
              <ellipse cx={x} cy={y} rx={r} ry="23" />
              <path d={`M${x - 22} ${y + 1}Q${x - 20} ${y - 14} ${x} ${y - 15}Q${x + 20} ${y - 14} ${x + 22} ${y + 1}`} fill="none" stroke="#1f3850" />
              <path d={`M${x - 17} ${y + 16}Q${x} ${y + 4} ${x + 17} ${y + 16}Q${x} ${y + 25} ${x - 17} ${y + 16}Z`} fill="#8cf4ff" stroke="none" />
            </g>
          ))}
          {screwHoles.map(([x, y]) => (
            <g key={x}>
              <ellipse cx={x} cy={y} rx="22" ry="18" />
              <path d={`M${x - 15} ${y + 8}Q${x} ${y - 4} ${x + 15} ${y + 8}M${x - 11} ${y + 13}Q${x} ${y + 5} ${x + 11} ${y + 13}`} fill="none" stroke="#6fd8e6" />
            </g>
          ))}
        </g>
      </g>
    </svg>
  );
}

function SectionHead({ children }: { children: React.ReactNode }) {
  return (
    <div className="flex items-center justify-between pr-px">
      <h2 className="text-sm leading-5 text-[#2487bb]">{children}</h2>
      <button aria-label="折叠" className="text-[#1f7fa8]">
        <svg viewBox="0 0 10 10" className="size-2.5" aria-hidden="true"><path d="M0 9H2.600L5 4.500L7.400 9H10L6 1H4Z" fill="currentColor" /></svg>
      </button>
    </div>
  );
}

function EditDialog() {
  return (
    <section role="dialog" aria-label="编辑分型面和曲面补片" className="absolute top-[28px] left-[422px] w-[328px] border border-t-0 border-[#c0c0c0] bg-[#e9e9e9] pb-[9px] text-xs text-[#222]">
      <div className="flex h-6 items-center bg-[#5c8780] pr-[3px] pl-1.5 text-white">
        <Settings className="size-4" strokeWidth={3} />
        <h1 className="ml-2 flex-1 text-[13px] leading-6">编辑分型面和曲面补片</h1>
        <button aria-label="重置" className="mr-0.5 pt-[3px]"><RotateCcw className="size-[15px]" strokeWidth={3} /></button>
        <button aria-label="关闭" className="pt-[3px]"><X className="size-[22px]" strokeWidth={2.5} /></button>
      </div>
      <div className="mx-[5px] mt-1 h-[71px] border-b border-[#c8c8c8] bg-white pt-[3px] pr-[9px] pl-[7px]">
        <SectionHead>分型面和曲面补片</SectionHead>
        <div className="mt-[7px] ml-px flex h-8 gap-0.5">
          <div className="flex flex-1 items-center bg-[#fdd76f] pl-[7px]">
            <span className="w-3 pt-1 text-lg leading-5 font-bold text-[#d8150c]">*</span>
            <span>选择片体 (0)</span>
          </div>
          <button aria-label="选择片体" className="flex w-8 items-center justify-center border border-[#fad56c] bg-[#f7e7b3]">
            <Glyph className="size-6" shapes={[["M62 26L84 34L70 50V70L50 62Z", "#c8b98c"], ["M18 14Q26 4 42 8L82 16Q60 22 64 48L46 86L4 68Q18 56 18 14Z", "url(#sheet)", "#4868cc"]]} />
            <svg className="absolute size-0" aria-hidden="true"><defs><linearGradient id="sheet" x1="0" y1="0" x2="1" y2="1"><stop offset="0" stopColor="#2f55e0" /><stop offset=".4" stopColor="#d8e7ff" /><stop offset="1" stopColor="#2450dc" /></linearGradient></defs></svg>
          </button>
        </div>
      </div>
      <div className="mx-[5px] mt-[3px] h-[83px] border-b border-[#c8c8c8] bg-white pt-[3px] pr-[9px] pl-[7px]">
        <SectionHead>设置</SectionHead>
        <label className="mt-2 ml-px flex items-center gap-[5px] leading-5">
          <input type="checkbox" className="size-[13px] appearance-none border border-[#222] bg-white" />
          保留原片体
        </label>
        <div className="mt-[3px] ml-px flex items-center justify-between leading-5">
          <span>补片颜色</span>
          <button aria-label="补片颜色" className="mb-1 h-[15px] w-[72px] border border-[#5f6468] bg-[#99c8e9]" />
        </div>
      </div>
      <div className="mx-[5px] flex h-[18px] items-center justify-center border-b border-[#cfcfcf]">
        <button aria-label="收起对话框"><svg viewBox="0 0 10 5" className="h-[5px] w-2.5" aria-hidden="true"><path d="M0 5L5 0L10 5Z" fill="#222" /></svg></button>
      </div>
      <div className="mt-2 flex justify-end gap-[5px] pr-[15px]">
        <button disabled className="h-[25px] w-[54px] border border-[#b4b6b9] text-[#a6a6a8]">确定</button>
        <button disabled className="h-[25px] w-[54px] border border-[#b4b6b9] text-[#a6a6a8]">应用</button>
        <button className="h-[25px] w-[54px] border border-[#a5a7ab] bg-[#c8c9ce]">取消</button>
      </div>
    </section>
  );
}

const cube = (fill: string, stroke: string): Shape[] => [
  ["M6 24L44 6L84 20V66L48 86L6 70Z", fill, stroke, 6],
  ["M6 24L48 38L84 20M48 38V86", "none", stroke, 6],
];
const boxes: Shape[] = [
  ["M6 12L26 4L50 10V40L64 34L86 42V76L58 88L6 74Z", "#f1d77c", "#a88a3c", 6],
  ["M6 14L28 22L50 10M28 22V80M6 44L28 50L50 40M36 48L58 56L86 44M58 56V88", "none", "#a88a3c", 6],
];
const treeNodes: { name: string; expand?: boolean; dim?: boolean; checked?: boolean; shapes: Shape[] }[] = [
  { name: "产品实体", expand: true, shapes: cube("#f5bd55", "#d8603a") },
  { name: "工件", dim: true, shapes: cube("#e9ebf8", "#6a68c4") },
  { name: "工件线框", checked: true, shapes: [...cube("#e9ebf8", "#6a68c4"), ["M44 6V52L6 70M44 52L84 66", "none", "#6a68c4", 5]] },
  { name: "分型线", dim: true, shapes: [["M4 46Q20 8 46 8Q70 16 86 36L46 82Z", "#d5d8f2", "#a2466c", 7], ["M24 24L66 58M20 58L66 20", "none", "#6b6ac6", 5]] },
  { name: "引导线", dim: true, shapes: [["M18 18L54 84M38 6L74 70", "none", "#a0705f", 6]] },
  { name: "分型面", dim: true, shapes: [["M4 34L26 12H66L52 34Z", "#8bb2e8", "#4e72b4", 5], ["M52 34L66 12Q92 24 88 70L62 84Q70 48 52 34Z", "#f0a066", "#cd6a3b", 5]] },
  { name: "曲面补片", dim: true, shapes: [["M20 10H84Q66 40 68 70L26 86Q10 70 6 74Q24 40 20 10Z", "#a3c3ef", "#5f85c5", 5], [dot(46, 38, 12), "#fff", "#c94545", 7]] },
  { name: "修补实体", dim: true, shapes: [["M8 34L30 28V10H46V28L82 40V78L46 88L8 70Z", "#f0f1df", "#55564a", 6], ["M46 44V88M8 38L46 50L82 42", "none", "#55564a", 5], ["M50 54L76 48V72L50 80Z", "#ded64a"]] },
  { name: "型腔", expand: true, shapes: boxes },
  { name: "型芯", expand: true, shapes: boxes },
];

function Expander({ open }: { open?: boolean }) {
  return (
    <button aria-label={open ? "折叠节点" : "展开节点"} className="flex size-[9px] items-center justify-center border border-[#c9cbcd] bg-[#e4e6e7]">
      <svg viewBox="0 0 5 5" className="size-[5px]" aria-hidden="true"><path d={open ? "M0 2.500H5" : "M0 2.500H5M2.500 0V5"} stroke="#777" strokeWidth="1" /></svg>
    </button>
  );
}

function Navigator() {
  return (
    <section aria-label="分型导航器" className="absolute top-[294px] left-[486px] h-[480px] w-[219px] border border-[#b9bcbe]/60 bg-[#eeeff0]/45 text-xs text-[#55595c]/75">
      <div className="flex h-[22px] items-center justify-between bg-[#5c8780]/40 pr-px pl-1 text-white">
        <h2 className="text-[11px] font-bold text-white/70">分型导航器</h2>
        <button aria-label="关闭导航器" className="text-white/85"><X className="size-[22px]" strokeWidth={2.5} /></button>
      </div>
      <div className="mt-[7px] ml-[5px] h-[460px] w-[209px] border-t border-l border-[#c3c5c7]/80 pr-[5px]">
        <div className="border-r border-[#c3c5c7]/60">
          <div className="flex h-[21px] items-center border-b border-[#b9bcbe] pl-[7px]">分型对象</div>
          <ul>
            <li className="flex h-5 items-center border-b border-[#cdcfd1]/60 pl-1.5">
              <Expander open />
              <span className="ml-0.5 w-1 border-t border-dotted border-[#999]" />
              <Glyph className="mr-[3px] size-[15px] opacity-60" shapes={moldHalves} />
              分型设计
            </li>
            {treeNodes.map((n) => (
              <li key={n.name} className="flex h-5 items-center border-b border-[#cdcfd1]/60 pl-[25px]">
                <span className="relative flex h-5 w-[9px] items-center justify-center">
                  <span className="absolute top-0 left-1 h-5 border-l border-dotted border-[#aaa]" />
                  <span className="relative">{n.expand && <Expander />}</span>
                </span>
                <span className="mr-[3px] w-1 border-t border-dotted border-[#999]" />
                <label className={`flex items-center ${n.dim ? "text-[#aaadaf]/50" : ""}`}>
                  <span className="relative size-3">
                    <input type="checkbox" defaultChecked={n.checked} className="peer absolute inset-0 size-3 appearance-none border border-[#808080]" />
                    <svg viewBox="0 0 12 12" className="pointer-events-none absolute inset-0 hidden size-3 peer-checked:block" aria-hidden="true"><path d="M1.500 5.500L4.500 9L10.500 2.500" fill="none" stroke="#d9656a" strokeWidth="2.600" /></svg>
                  </span>
                  <Glyph className="mx-[3px] size-[15px] opacity-60" shapes={n.shapes} />
                  {n.name}
                </label>
              </li>
            ))}
            {Array.from({ length: 10 }, (_, i) => <li key={i} className="h-5 border-b border-[#cdcfd1]/40" />)}
          </ul>
        </div>
      </div>
    </section>
  );
}

function PaletteHead({ title }: { title: string }) {
  return (
    <div className="flex h-7 items-center bg-[#5c8780] pr-0.5 pl-1.5 text-white">
      <h2 className="flex-1 pb-0.5 text-[11px] font-bold">{title}</h2>
      <button aria-label="选项" className="mr-[7px] pb-[3px]"><Caret className="text-white" /></button>
      <button aria-label="关闭" className="pb-0.5"><X className="size-[22px]" strokeWidth={2.5} /></button>
    </div>
  );
}

function PaletteButton({ item }: { item: WizardItem }) {
  return (
    <button aria-pressed={item.active} className={`flex h-[74px] w-[70px] shrink-0 flex-col items-center pt-1 pr-[5px] pl-[3px] ${item.active ? "bg-[#c7d8d6] outline outline-1 -outline-offset-1 outline-[#9fbdb8]" : ""}`}>
      <span className="relative">
        <Glyph shapes={item.shapes} />
        <Letters items={item.letters} />
      </span>
      <span className="mt-[5px] block w-[62px] text-center text-[11px] leading-4 break-words text-[#1d1d1d]">{item.name}</span>
    </button>
  );
}

function PartingPalette() {
  return (
    <section aria-label="模具分型工具" className="absolute top-[62px] left-[761px] flex w-[76px] flex-col border border-[#a8aaac] bg-white pb-0.5">
      <PaletteHead title="M..." />
      <div className="flex flex-col items-center pt-px">
        {moldParting.map((m) => <PaletteButton key={m.name} item={m} />)}
      </div>
    </section>
  );
}

function WizardPalette() {
  return (
    <section aria-label="注塑模向导" className="absolute top-[65px] left-[904px] w-[216px] border border-[#a8aaac] bg-white pb-4">
      <PaletteHead title="注塑模向导" />
      <div className="ml-[2px] flex w-[212px] flex-wrap">
        {wizard.map((w, i) =>
          w === "more" ? (
            <button key={i} aria-label="更多修边工具" className="flex h-[74px] w-3 items-center justify-center"><Caret /></button>
          ) : (
            <PaletteButton key={i} item={w} />
          ),
        )}
      </div>
    </section>
  );
}

function Watermark() {
  return (
    <div className="pointer-events-none absolute top-[667px] left-[875px] flex w-[262px] items-start justify-between" aria-hidden="true">
      <svg viewBox="15 395 217 245" className="h-[82px] w-[72px] opacity-70">
        <path d="M124 396L230 456V578L124 640L16 578V456Z" fill="#51b8ee" />
        <path d="M124 396L178 426Q188 446 170 462L124 440L64 474L16 500V456Z" fill="#b2e0f7" />
        <path d="M16 500L64 482V548L72 610L16 578Z" fill="#84cdf4" />
        <path d="M64 556L120 588Q160 610 222 582L124 640L72 610Z" fill="#43b8f5" />
        <path d="M180 430Q190 452 180 474V548Q216 520 230 468M64 482Q76 430 140 404M64 550Q62 596 82 614M120 586Q170 602 214 586" fill="none" stroke="#e8f8ff" strokeWidth="5" />
        <path d="M124 464L172 492V548L124 574L76 548V492Z" fill="#5bc0f2" stroke="#e8f8ff" strokeWidth="5" />
        <path d="M124 464L172 492L124 518L76 492Z" fill="#a5dcf7" stroke="#e8f8ff" strokeWidth="4" />
        <path d="M124 518V574" stroke="#e8f8ff" strokeWidth="4" />
      </svg>
      <div className="flex flex-col items-end pt-3 pr-1 font-bold text-white/55">
        <span className="text-[32px] leading-10">网</span>
        <span className="text-sm leading-6">COM</span>
      </div>
    </div>
  );
}

function ImeBar() {
  return (
    <div className="absolute top-[652px] left-[1000px] flex items-center">
      <svg viewBox="0 0 28 28" className="relative z-10 size-7" role="img" aria-label="输入法">
        <g transform="rotate(-12 14 14)">
          <rect x="2" y="2" width="24" height="24" rx="4" fill="#31ac1c" />
          <text x="14" y="23" textAnchor="middle" fontSize="25" fontWeight="800" fontFamily="Inter" fill="#fff">S</text>
        </g>
      </svg>
      <div className="mt-1 -ml-4 flex h-6 w-[150px] items-center gap-[7px] border border-[#b6c6d3] bg-[#fbfdfe] pl-[21px] text-[#4a5162]">
        <button aria-label="五笔" className="text-[15px] leading-5 font-bold">五</button>
        <button aria-label="半角"><svg viewBox="0 0 14 14" className="size-[14px]"><path d="M9 0.500Q9 9 0.500 10.500Q4 14 8.500 13Q14 11 13.500 5.500Q13 2 9 0.500Z" fill="currentColor" /></svg></button>
        <button aria-label="中文标点"><svg viewBox="0 0 13 14" className="h-[14px] w-[13px]"><circle cx="3.500" cy="4" r="2" fill="none" stroke="currentColor" strokeWidth="1.500" /><path d="M7 8a2.300 2.300 0 1 1 4.600 0Q12 11 8 13L7.500 12Q9 11.300 9.200 10Q7 10 7 8Z" fill="currentColor" /></svg></button>
        <button aria-label="软键盘"><svg viewBox="0 0 17 14" className="h-[14px] w-[17px]"><rect x="1" y="2" width="15" height="10" rx="1" fill="none" stroke="currentColor" strokeWidth="1.600" /><path d="M3 5H14M3 7.500H14" stroke="currentColor" strokeWidth="1.400" strokeDasharray="1.500 1" /><path d="M5 10H12" stroke="currentColor" strokeWidth="1.300" /></svg></button>
        <button aria-label="用户"><svg viewBox="0 0 14 14" className="size-[14px]"><circle cx="7" cy="3" r="3" fill="currentColor" /><path d="M3 6Q7 8 11 6L13.500 9L12 11L10.500 10Q10 14 7 14T3.500 10L2 11L0.500 9Z" fill="currentColor" /></svg></button>
        <button aria-label="工具箱"><svg viewBox="0 0 14 14" className="size-[14px]"><path d="M6.500 6.500H3A3 3 0 1 1 6.500 3ZM6.500 7.500V11A3 3 0 1 1 3 7.500ZM7.500 7.500H11A3 3 0 1 1 7.500 11Z" fill="currentColor" /><circle cx="10.500" cy="3.500" r="2.200" fill="none" stroke="currentColor" strokeWidth="1.600" /></svg></button>
      </div>
    </div>
  );
}

const callouts = [
  { n: 1, x: 942, y: 155, arrow: "M952 162L992 235L988 237L1003 247L1001 229L998 232Z" },
  { n: 2, x: 1009, y: 147, arrow: "M1011 162L1056 230L1052 232L1068 241L1066 223L1062 226L1013 161Z" },
  { n: 3, x: 719, y: 324, arrow: "M726 337L783 409L779 412L796 420L793 402L789 405L728 335Z" },
  { n: 4, x: 594, y: 163, arrow: "M529 85L545 93L541 96L585 158L584 160L536 101L531 102Z" },
];

function Callouts() {
  return (
    <svg viewBox="0 0 1158 762" className="pointer-events-none absolute top-0 left-0 h-[762px] w-[1158px]" aria-label="步骤标注">
      {callouts.map((c) => (
        <g key={c.n}>
          <path d={c.arrow} fill="#fb3a3a" stroke="#fb3a3a" strokeWidth="1" strokeLinejoin="round" />
          <circle cx={c.x} cy={c.y} r="10" fill="#fb3a3a" />
          <text x={c.x} y={c.y + 4} textAnchor="middle" fontSize="12" fontFamily="Noto Sans" fill="#fff">{c.n}</text>
        </g>
      ))}
    </svg>
  );
}

export default function App() {
  return (
    <div className="relative flex h-screen w-full flex-col overflow-hidden bg-white font-['Noto_Sans','Noto_Sans_CJK_SC',sans-serif]">
      <Toolbars />
      <main className="relative flex-1 overflow-hidden bg-linear-to-b from-[#b6b7ba] to-[#ebecee]">
        <MoldModel />
      </main>
      <Navigator />
      <EditDialog />
      <PartingPalette />
      <WizardPalette />
      <Watermark />
      <ImeBar />
      <Callouts />
    </div>
  );
}
